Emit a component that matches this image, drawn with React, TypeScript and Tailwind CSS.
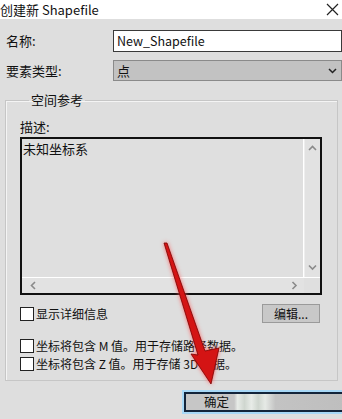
import type { ReactNode } from 'react'

const font = { fontFamily: '"Noto Sans CJK SC", "Noto Sans", sans-serif' }

function Checkbox({ children }: { children: ReactNode }) {
  return (
    <div className="flex h-[14px] items-center gap-[2px] text-[12px] leading-[14px] text-[#111]">
      <span className="h-[14px] w-[14px] shrink-0 border border-[#222] bg-white" />
      <span>{children}</span>
    </div>
  )
}

function Arrow({ dir }: { dir: 'up' | 'down' | 'left' | 'right' }) {
  const d = {
    up: 'M1 5 L4.5 1.5 L8 5',
    down: 'M1 1.5 L4.5 5 L8 1.5',
    left: 'M5 1 L1.5 4.5 L5 8',
    right: 'M1.5 1 L5 4.5 L1.5 8',
  }[dir]
  const w = dir === 'up' || dir === 'down' ? 9 : 7
  const h = dir === 'up' || dir === 'down' ? 7 : 9
  return (
    <svg width={w} height={h} viewBox={`0 0 ${w} ${h}`}>
      <path d={d} fill="none" stroke="#8a8a8a" strokeWidth="1.6" />
    </svg>
  )
}

export default function App() {
  return (
    <div className="relative h-[419px] w-[342px] overflow-hidden bg-[#dedede]" style={font}>
      {/* Title bar */}
      <div className="flex h-[19px] items-center justify-between bg-white">
        <span className="text-[13px] leading-[16px] text-[#111]">创建新 Shapefile</span>
        <svg width="13" height="13" viewBox="0 0 13 13" className="mr-[3px]">
          <path d="M1 1 L12 12 M12 1 L1 12" stroke="#222" strokeWidth="1.2" />
        </svg>
      </div>

      {/* Name */}
      <div className="mt-[11px] flex h-[22px] items-center">
        <span className="w-[113px] pl-[6px] text-[13px] text-[#111]">名称:</span>
        <div className="flex h-[22px] flex-1 items-center border border-[#3a3a3a] bg-white pl-[3px] text-[12.5px] text-[#111]">
          New_Shapefile
        </div>
      </div>

      {/* Type */}
      <div className="mt-[8px] flex h-[21px] items-center">
        <span className="w-[113px] pl-[6px] text-[13px] text-[#111]">要素类型:</span>
        <div className="flex h-[21px] flex-1 items-center justify-between border border-[#8a8a8a] bg-[#c2c2c2] pl-[3px] pr-[4px] text-[13px] text-[#111]">
          <span>点</span>
          <svg width="9" height="6" viewBox="0 0 9 6">
            <path d="M1 1 L4.5 4.5 L8 1" fill="none" stroke="#222" strokeWidth="1.5" />
          </svg>
        </div>
      </div>

      {/* Spatial reference */}
      <fieldset className="ml-[5px] mr-[4px] mt-[11px] border border-[#c6c6c6] pb-[9px] pl-[14px] pr-[15px] shadow-[inset_1px_1px_0_#f4f4f4]">
        <legend className="ml-[9px] px-[2px] text-[13px] leading-[16px] text-[#111]">空间参考</legend>
        <div className="mt-[11px] h-[16px] text-[13px] leading-[16px] text-[#111]">描述:</div>
        <div className="mt-[2px] flex h-[158px] flex-col border-2 border-[#111] bg-[#dfdfdf]">
          <div className="flex flex-1">
            <div className="flex-1 border-r border-white pl-[1px] pt-[2px] text-[13px] leading-[16px] text-[#111]">
              未知坐标系
            </div>
            <div className="flex w-[16px] flex-col items-center justify-between border-l border-[#eeeeee] bg-[#e2e2e2] py-[6px]">
              <Arrow dir="up" />
              <Arrow dir="down" />
            </div>
          </div>
          <div className="flex h-[16px] border-t border-white">
            <div className="flex flex-1 items-center justify-between bg-[#e2e2e2] pl-[8px] pr-[6px]">
              <Arrow dir="left" />
              <Arrow dir="right" />
            </div>
            <div className="w-[16px] bg-[#dfdfdf]" />
          </div>
        </div>

        <div className="mt-[9px] flex h-[19px] items-center justify-between">
          <Checkbox>显示详细信息</Checkbox>
          <div className="mr-[2px] flex h-[19px] w-[58px] items-center justify-center border border-[#9a9a9a] bg-[#c8c8c8] text-[12px] text-[#111]">
            编辑...
          </div>
        </div>

        <div className="mt-[16px] flex flex-col gap-[4px]">
          <Checkbox>坐标将包含 M 值。用于存储路径数据。</Checkbox>
          <Checkbox>坐标将包含 Z 值。用于存储 3D 数据。</Checkbox>
        </div>
      </fieldset>

      {/* OK */}
      <div className="mt-[9px] flex justify-end">
        <div className="-mr-[20px] h-[24px] w-[180px] border-2 border-[#a8d8f6] bg-[#13243a] p-[2px]">
          <div className="flex h-full items-center bg-[linear-gradient(90deg,#c6c6c6_0%,#c6c6c6_28%,#e8ece8_30%,#cfd6cf_34%,#e8ece8_38%,#cfd6cf_42%,#e6eae6_46%,#c3c3c3_52%,#bdbdbd_100%)] pl-[18px] text-[12.5px] text-[#111]">
            确定
          </div>
        </div>
      </div>

      {/* Red arrow annotation */}
      <svg
        className="pointer-events-none absolute left-0 top-0 drop-shadow-[0_0_2px_rgba(255,90,90,0.9)]"
        width="342"
        height="419"
        viewBox="0 0 342 419"
      >
        <polygon
          points="164,243 167,243 205,351 219,348 211,384 191,354 198,355"
          fill="#d41414"
          stroke="#7a0000"
          strokeWidth="0.8"
          strokeLinejoin="round"
        />
      </svg>
    </div>
  )
}
